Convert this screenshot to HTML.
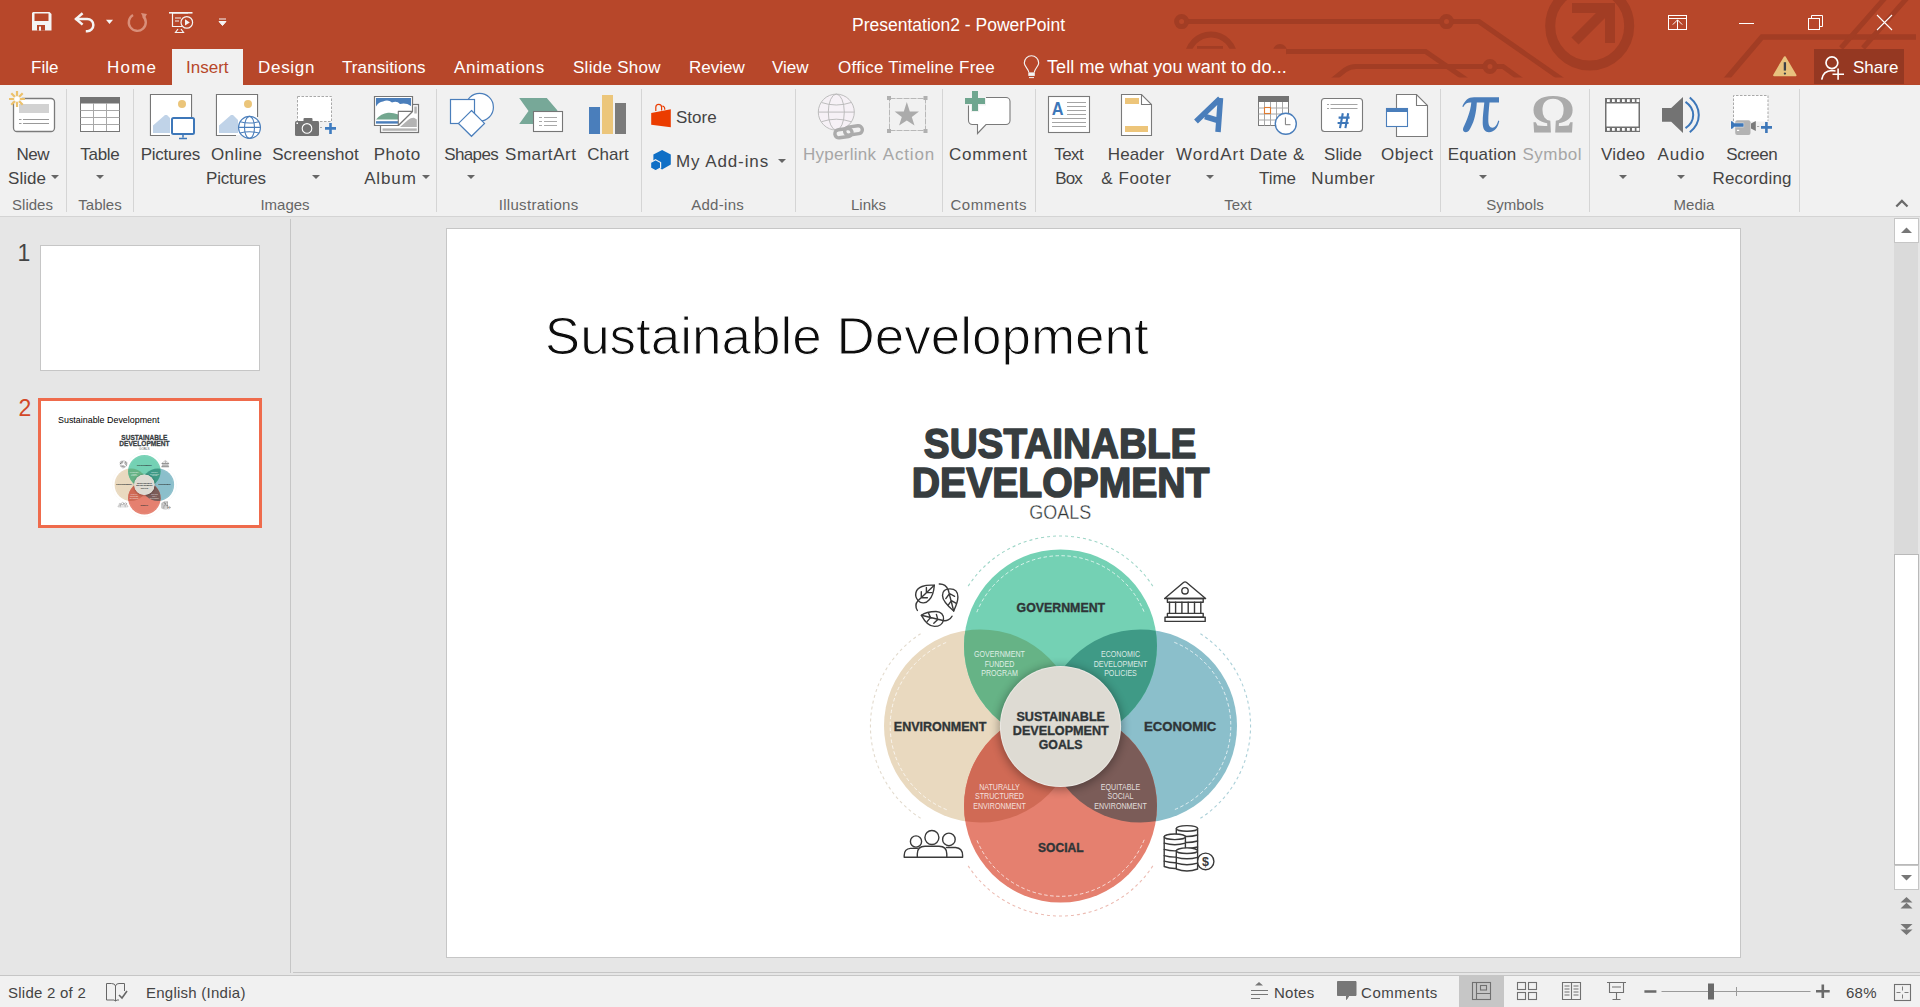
<!DOCTYPE html>
<html><head><meta charset="utf-8">
<style>
*{margin:0;padding:0;box-sizing:border-box}
html,body{width:1920px;height:1007px;overflow:hidden;background:#e6e6e6;font-family:"Liberation Sans",sans-serif}
.a{position:absolute}
#top{left:0;top:0;width:1920px;height:85px;background:#b7472a}
.tab{position:absolute;top:57.5px;color:#fff;font-size:17px;line-height:20px;white-space:nowrap}
#ribbon{left:0;top:85px;width:1920px;height:132px;background:#f1f1f1;border-bottom:1px solid #d4d4d4}
.sep{position:absolute;top:4px;width:1px;height:123px;background:#d5d5d5}
.lbl{position:absolute;font-size:17px;line-height:24px;color:#444;white-space:nowrap;text-align:center}
.glbl{position:absolute;top:111px;font-size:15px;line-height:18px;color:#666;white-space:nowrap;text-align:center}
.dd{position:absolute;width:0;height:0;border-left:4px solid transparent;border-right:4px solid transparent;border-top:4px solid #666}
.dis{color:#a6a6a6}
#left{left:0;top:217px;width:290px;height:755px;background:#e6e6e6}
#main{left:291px;top:217px;width:1629px;height:755px;background:#e6e6e6}
#status{left:0;top:975px;width:1920px;height:32px;background:#f1f1f1;border-top:1px solid #c6c6c6}
.st{position:absolute;font-size:15px;line-height:18px;color:#444;white-space:nowrap;letter-spacing:0.25px}
</style></head><body>
<!-- TITLE BAR -->
<div id="top" class="a">
  <svg class="a" style="left:0;top:0" width="1920" height="85">
    <defs><clipPath id="cp"><path d="M0 0H1920V77.5H0Z"/></clipPath><clipPath id="cp2"><path d="M1286 0H1920V77.5H1286ZM0 0H1920V48.75H0Z"/></clipPath></defs>
    <g clip-path="url(#cp2)" fill="none" stroke="#a23d24" stroke-width="5">
      <path d="M1187.5 21.6H1440.5M1452.5 21.6H1479L1600 106"/>
      <circle cx="1181.6" cy="21.6" r="5"/>
      <circle cx="1446.5" cy="21.6" r="5"/>
      <path d="M1187.5 58A23.5 23.5 0 0 1 1234.5 58" stroke-width="6"/>
      <path d="M1197 47.5H1223" stroke-width="3"/>
      <circle cx="1280" cy="51" r="4.5"/>
      <path d="M1285 51.5H1425.5L1490 96"/>
      <path d="M1320 90L1345 70Q1350 66.5 1356 66.5H1484M1496 66.5H1503L1530 86"/>
      <circle cx="1490" cy="66.5" r="5"/>
      <circle cx="1589.7" cy="26" r="39.5" stroke-width="10"/>
      <path d="M1575 41L1604 12M1572 8H1610V43" stroke-width="10" stroke-linecap="butt" stroke-linejoin="miter"/>
      <path d="M1700 110L1762 37H1916" stroke-width="5.5"/>
      <path d="M1841 48L1892 -10M1863 48L1914 -10" stroke-width="5"/>
    </g>
    <!-- QAT -->
    <path d="M33 12H49.5L51.5 14V30.5H32V13Z" fill="#f4f4f4"/>
    <rect x="34.5" y="13.5" width="14" height="7.5" fill="#b7472a"/>
    <rect x="37" y="25" width="8" height="5.6" fill="#b7472a"/>
    <rect x="39" y="26.5" width="2" height="4.1" fill="#f4f4f4"/>
    <path d="M75.5 18.9H87.2A6.15 6.15 0 0 1 87.2 31.2H85.8" fill="none" stroke="#f4f4f4" stroke-width="2.5"/>
    <path d="M82.6 13.2L76 18.9L82.6 24.6" fill="none" stroke="#f4f4f4" stroke-width="2.5"/>
    <path d="M106 19.75H113L109.5 24Z" fill="#f4f4f4"/>
    <path d="M143 16A8.5 8.5 0 1 1 133 15" fill="none" stroke="#d98f7a" stroke-width="2.4"/>
    <path d="M141 13L147 14L144 19.5Z" fill="#d98f7a"/>
    <path d="M169 12.8H192.5" stroke="#f4f4f4" stroke-width="1.6"/>
    <path d="M172.5 13V26.5H182M172.5 13H188" fill="none" stroke="#f4f4f4" stroke-width="1.2"/>
    <path d="M175 18H181M175 21H179" stroke="#f4f4f4" stroke-width="1"/>
    <circle cx="186.8" cy="22.4" r="5.8" fill="#b7472a" stroke="#f4f4f4" stroke-width="1.2"/>
    <path d="M185 19.3V25.5L189.8 22.4Z" fill="#f4f4f4"/>
    <path d="M178 29L175.5 32.5H183.5L181 29" fill="none" stroke="#f4f4f4" stroke-width="1.2"/>
    <path d="M219 19H226M219 21.5H226L222.5 25.5Z" fill="#f4f4f4" stroke="#f4f4f4" stroke-width="1"/>
    <!-- window buttons -->
    <rect x="1668.5" y="15.5" width="18" height="14" fill="none" stroke="#fff" stroke-width="1"/>
    <path d="M1668.5 18.5H1686.5M1677.5 29.5V19.8M1672.8 24.6L1677.5 19.9L1682.2 24.6" fill="none" stroke="#fff" stroke-width="1"/>
    <path d="M1739 23.5H1754" stroke="#fff" stroke-width="1"/>
    <rect x="1808.5" y="18.5" width="11" height="11" fill="none" stroke="#fff" stroke-width="1"/>
    <path d="M1811.5 18.5V15.5H1822.5V26.5H1819.5" fill="none" stroke="#fff" stroke-width="1"/>
    <path d="M1877 15L1892 30M1892 15L1877 30" stroke="#fff" stroke-width="1.1"/>
    <!-- tell me bulb -->
    <path d="M1028.9 72.5C1028.3 68.5 1024.3 66.3 1024.3 62.9A7.2 7.2 0 0 1 1038.7 62.9C1038.7 66.3 1034.7 68.5 1034.2 72.5" fill="none" stroke="#f4f4f4" stroke-width="1.15"/>
    <rect x="1028.3" y="72.4" width="6.5" height="3.5" fill="#f4f4f4"/>
    <path d="M1029 77.6H1034" stroke="#f4f4f4" stroke-width="1"/>
    <!-- warning -->
    <path d="M1784.8 57.3L1795.4 75.2H1774.2Z" fill="#e8c27e" stroke="#e8c27e" stroke-width="2.2" stroke-linejoin="round"/>
    <path d="M1784.9 62.2V70.6" stroke="#3a4149" stroke-width="2.3"/><circle cx="1784.9" cy="73.6" r="1.15" fill="#3a4149"/>
  </svg>
  <div class="tab" style="left:31px">File</div>
  <div class="tab" style="left:107px;letter-spacing:1.2px">Home</div>
  <div class="a" style="left:172px;top:49px;width:71px;height:36px;background:#f1f1f1"></div>
  <div class="tab" style="left:186px;color:#b7472a">Insert</div>
  <div class="tab" style="left:258px;letter-spacing:0.7px">Design</div>
  <div class="tab" style="left:342px;letter-spacing:0.1px">Transitions</div>
  <div class="tab" style="left:454px;letter-spacing:0.67px">Animations</div>
  <div class="tab" style="left:573px;letter-spacing:0.28px">Slide Show</div>
  <div class="tab" style="left:689px">Review</div>
  <div class="tab" style="left:772px">View</div>
  <div class="tab" style="left:838px;letter-spacing:0.26px">Office Timeline Free</div>
  <div class="tab" style="left:1047px;top:56.7px;font-size:18px;letter-spacing:0.09px">Tell me what you want to do...</div>
  <div class="a" style="left:852px;top:15px;color:#fff;font-size:17.5px;line-height:20px;white-space:nowrap">Presentation2 - PowerPoint</div>
  <div class="a" style="left:1814px;top:49px;width:90px;height:35px;background:#953822"></div>
  <svg class="a" style="left:1814px;top:49px" width="40" height="36"><circle cx="17.9" cy="13.7" r="5.9" fill="none" stroke="#fff" stroke-width="1.7"/><path d="M7.7 30.6Q9 21.8 18 21.5L21.5 22" fill="none" stroke="#fff" stroke-width="1.7"/><path d="M18.5 25.2H30M24.1 19.6V30.7" stroke="#fff" stroke-width="1.6"/></svg>
  <div class="tab" style="left:1853px">Share</div>
</div>
<!-- RIBBON -->
<div id="ribbon" class="a">
<div class="lbl" style="left:-27.25px;top:57.8px;width:120px;letter-spacing:-0.50px">New</div>
<div class="lbl" style="left:-33.00px;top:81.9px;width:120px;letter-spacing:0.00px">Slide</div>
<div class="lbl" style="left:39.88px;top:57.8px;width:120px;letter-spacing:-0.25px">Table</div>
<div class="lbl" style="left:110.36px;top:57.8px;width:120px;letter-spacing:-0.29px">Pictures</div>
<div class="lbl" style="left:176.70px;top:57.8px;width:120px;letter-spacing:0.40px">Online</div>
<div class="lbl" style="left:175.89px;top:81.9px;width:120px;letter-spacing:-0.21px">Pictures</div>
<div class="lbl" style="left:255.53px;top:57.8px;width:120px;letter-spacing:0.06px">Screenshot</div>
<div class="lbl" style="left:337.25px;top:57.8px;width:120px;letter-spacing:0.50px">Photo</div>
<div class="lbl" style="left:330.44px;top:81.9px;width:120px;letter-spacing:0.88px">Album</div>
<div class="lbl" style="left:411.20px;top:57.8px;width:120px;letter-spacing:-0.60px">Shapes</div>
<div class="lbl" style="left:480.79px;top:57.8px;width:120px;letter-spacing:0.57px">SmartArt</div>
<div class="lbl" style="left:548.00px;top:57.8px;width:120px;letter-spacing:0.00px">Chart</div>
<div class="lbl dis" style="left:779.62px;top:57.8px;width:120px;letter-spacing:0.25px">Hyperlink</div>
<div class="lbl dis" style="left:848.90px;top:57.8px;width:120px;letter-spacing:0.80px">Action</div>
<div class="lbl" style="left:928.38px;top:57.8px;width:120px;letter-spacing:0.75px">Comment</div>
<div class="lbl" style="left:1008.75px;top:57.8px;width:120px;letter-spacing:-0.50px">Text</div>
<div class="lbl" style="left:1008.50px;top:81.9px;width:120px;letter-spacing:-1.00px">Box</div>
<div class="lbl" style="left:1076.05px;top:57.8px;width:120px;letter-spacing:0.10px">Header</div>
<div class="lbl" style="left:1076.32px;top:81.9px;width:120px;letter-spacing:0.64px">&amp; Footer</div>
<div class="lbl" style="left:1150.50px;top:57.8px;width:120px;letter-spacing:1.00px">WordArt</div>
<div class="lbl" style="left:1217.25px;top:57.8px;width:120px;letter-spacing:0.50px">Date &amp;</div>
<div class="lbl" style="left:1217.50px;top:81.9px;width:120px;letter-spacing:0.00px">Time</div>
<div class="lbl" style="left:1283.00px;top:57.8px;width:120px;letter-spacing:0.00px">Slide</div>
<div class="lbl" style="left:1283.30px;top:81.9px;width:120px;letter-spacing:0.60px">Number</div>
<div class="lbl" style="left:1347.30px;top:57.8px;width:120px;letter-spacing:0.60px">Object</div>
<div class="lbl" style="left:1422.11px;top:57.8px;width:120px;letter-spacing:0.21px">Equation</div>
<div class="lbl dis" style="left:1492.25px;top:57.8px;width:120px;letter-spacing:0.50px">Symbol</div>
<div class="lbl" style="left:1563.12px;top:57.8px;width:120px;letter-spacing:0.25px">Video</div>
<div class="lbl" style="left:1621.44px;top:57.8px;width:120px;letter-spacing:0.88px">Audio</div>
<div class="lbl" style="left:1691.75px;top:57.8px;width:120px;letter-spacing:-0.50px">Screen</div>
<div class="lbl" style="left:1692.09px;top:81.9px;width:120px;letter-spacing:0.19px">Recording</div>
<div class="dd" style="left:50.5px;top:90px"></div>
<div class="dd" style="left:95.5px;top:90px"></div>
<div class="dd" style="left:311.5px;top:90px"></div>
<div class="dd" style="left:421.5px;top:90px"></div>
<div class="dd" style="left:467px;top:90px"></div>
<div class="dd" style="left:1206px;top:90px"></div>
<div class="dd" style="left:1478.5px;top:90px"></div>
<div class="dd" style="left:1618.5px;top:90px"></div>
<div class="dd" style="left:1676.5px;top:90px"></div>
<div class="glbl" style="left:-27.5px;width:120px">Slides</div>
<div class="glbl" style="left:40px;width:120px">Tables</div>
<div class="glbl" style="left:225px;width:120px">Images</div>
<div class="glbl" style="left:478.65px;width:120px;letter-spacing:0.3px">Illustrations</div>
<div class="glbl" style="left:657.65px;width:120px;letter-spacing:0.3px">Add-ins</div>
<div class="glbl" style="left:808.5px;width:120px">Links</div>
<div class="glbl" style="left:928.75px;width:120px;letter-spacing:0.5px">Comments</div>
<div class="glbl" style="left:1178px;width:120px">Text</div>
<div class="glbl" style="left:1455px;width:120px">Symbols</div>
<div class="glbl" style="left:1634px;width:120px">Media</div>
<div class="sep" style="left:66px"></div>
<div class="sep" style="left:133px"></div>
<div class="sep" style="left:436px"></div>
<div class="sep" style="left:641px"></div>
<div class="sep" style="left:795px"></div>
<div class="sep" style="left:942px"></div>
<div class="sep" style="left:1035px"></div>
<div class="sep" style="left:1440px"></div>
<div class="sep" style="left:1589px"></div>
<div class="sep" style="left:1799px"></div>
<div class="lbl" style="left:676px;top:20.8px;text-align:left">Store</div>
<div class="lbl" style="left:676px;top:64.8px;text-align:left;letter-spacing:0.9px">My Add-ins</div>
<div class="dd" style="left:778px;top:74px"></div>
<div class="a" style="left:1895px;top:115px;width:12px;height:12px"><svg width="16" height="12" style="position:absolute;top:-3px;left:-1px"><path d="M2.3 9.5L7.9 3.9L13.5 9.5" fill="none" stroke="#6a6a6a" stroke-width="2.2"/></svg></div>
</div>
<svg class="a" style="left:0;top:0" width="1920" height="217" viewBox="0 0 1920 217">
<!-- New Slide -->
<rect x="13.5" y="98.5" width="41" height="33" rx="3.5" fill="#fff" stroke="#7b7b7b" stroke-width="1.3"/>
<rect x="19" y="104" width="30" height="9" fill="#d2d2d2"/>
<path d="M19 119.5h2.5M23 119.5h26M19 123.5h2.5M23 123.5h26" stroke="#9a9a9a" stroke-width="1"/>
<circle cx="17" cy="99" r="5" fill="#f1f1f1"/>
<g stroke="#ecc16b" stroke-width="2.2"><path d="M17 91v16M9 99h16M11.3 93.3l11.4 11.4M22.7 93.3l-11.4 11.4"/></g>
<circle cx="17" cy="99" r="2.8" fill="#fff" stroke="#f1f1f1" stroke-width="0.5"/>
<!-- Table -->
<rect x="80.5" y="97.5" width="39" height="34" fill="#fff" stroke="#767676" stroke-width="1"/>
<rect x="80" y="97" width="40" height="6.5" fill="#737373"/>
<path d="M80.5 110.5h39M80.5 117.5h39M80.5 124.5h39M93.5 103v28M106.5 103v28" stroke="#a8a8a8" stroke-width="1"/>
<!-- Pictures -->
<path d="M170 135.5H150.5V94.5H191.5V117" fill="#fff" stroke="#767676" stroke-width="1.2"/>
<rect x="151" y="95" width="40" height="40" fill="#fff"/>
<circle cx="182" cy="104" r="4" fill="#ebc57a"/>
<path d="M153 133V125.5L165 115H167L170 118V133Z" fill="#c0d3e8"/>
<rect x="172" y="118" width="22" height="16" rx="1.5" fill="#fff" stroke="#3d77b9" stroke-width="2"/>
<path d="M183 135v2.5M179 138.5h8" stroke="#3d77b9" stroke-width="1.5"/>
<!-- Online Pictures -->
<path d="M236 135.5H216.5V94.5H257.5V117" fill="#fff" stroke="#767676" stroke-width="1.2"/>
<rect x="217" y="95" width="40" height="40" fill="#fff"/>
<circle cx="248" cy="104" r="4" fill="#ebc57a"/>
<path d="M219 133V125.5L231 115H233L238 120V133Z" fill="#c0d3e8"/>
<circle cx="249.5" cy="127.4" r="11.5" fill="#fff"/>
<g fill="none" stroke="#4a7ebb" stroke-width="1.1"><circle cx="249.5" cy="127.4" r="11"/><ellipse cx="249.5" cy="127.4" rx="5" ry="11"/><path d="M238.5 127.4h22M240 121.8q9.5 2.5 19 0M240 133q9.5 -2.5 19 0"/></g>
<!-- Screenshot -->
<rect x="297.5" y="96.5" width="34" height="25" fill="#fff" stroke="#a9a9a9" stroke-width="1" stroke-dasharray="2.5 1.5"/>
<rect x="295" y="121" width="24" height="15" rx="1.5" fill="#737373"/>
<rect x="303.5" y="118" width="9" height="4" rx="1" fill="#737373"/>
<circle cx="307" cy="128.4" r="4.8" fill="#737373" stroke="#fff" stroke-width="1.1"/>
<rect x="296.5" y="122.5" width="1.5" height="1.5" fill="#fff"/>
<path d="M320 127.5h2" stroke="#a9a9a9" stroke-width="1"/>
<path d="M330.5 123v11M325 128.4h11" stroke="#3f7cc0" stroke-width="2.6"/>
<!-- Photo Album -->
<rect x="380.5" y="104.5" width="38" height="28" fill="#fff" stroke="#767676" stroke-width="1.2"/>
<rect x="382.5" y="128.4" width="34.3" height="2.4" fill="#b3b3b3"/>
<rect x="414.3" y="106.5" width="2.5" height="7" fill="#b3b3b3"/>
<path d="M400 127L408 120Q411 117.5 414 117.8L416.8 119.5V127Z" fill="#b3b3b3"/>
<path d="M374.5 96.5H412.5V111.4L398.3 125.5H374.5Z" fill="#fff" stroke="#767676" stroke-width="1.2"/>
<path d="M376 98H411V106Q406 102.5 400 104Q397 100.5 392 102.5Q388 99 383 101.5Q378.5 102 376 106.5Z" fill="#4a7ebb"/>
<path d="M376 119.6Q381 113.5 388 112.8Q393 112.5 398.3 114.5V119.6Z" fill="#73a78f"/>
<rect x="376" y="121.2" width="22.3" height="2.4" fill="#4a7ebb"/>
<path d="M398.3 125.5V111.4H412.5Z" fill="#fff" stroke="#767676" stroke-width="1.1" stroke-linejoin="round"/>
<!-- Shapes -->
<circle cx="479.6" cy="107.2" r="13.8" fill="#fff" stroke="#4a7ebb" stroke-width="1.2"/>
<rect x="450.5" y="99.5" width="24" height="24" fill="#fff" stroke="#4a7ebb" stroke-width="1.2"/>
<path d="M471.5 110.5L484.5 123.4L471.5 136.3L458.5 123.4Z" fill="#fff" stroke="#4a7ebb" stroke-width="1.2"/>
<!-- SmartArt -->
<path d="M519.2 98.1H546.8L557.5 110.5L546.8 124H519.2L528.5 111Z" fill="#77a898"/>
<rect x="533.5" y="111.5" width="29" height="20" fill="#fff" stroke="#767676" stroke-width="1.1"/>
<path d="M539 117.5h3M544 117.5h13M539 121.5h3M544 121.5h13M539 125.5h3M544 125.5h13" stroke="#9e9e9e" stroke-width="0.9"/>
<!-- Chart -->
<rect x="589" y="107" width="11" height="27" fill="#4a7ebb"/>
<rect x="602" y="95" width="11" height="39" fill="#ecc67b"/>
<rect x="615" y="103" width="11" height="31" fill="#7b7b7b"/>
<!-- Store -->
<path d="M651.2 112.9L670.8 109.3V127.2L651.2 124.8Z" fill="#eb3c00"/>
<path d="M655.8 111V107.3A2.9 2.9 0 0 1 661.6 107.3V110.5M662.4 106.2A2.3 2.3 0 0 1 664.7 108.5V109.8" fill="none" stroke="#eb3c00" stroke-width="1.2"/>
<!-- My Add-ins -->
<path d="M662.1 149.9L670.8 154.5V164.5L662.1 169.5L653.4 164.5V154.5Z" fill="#0f6fc6"/>
<path d="M655.6 159.8L660.6 162.5V168L655.6 170.8L650.6 168V162.5Z" fill="#0f6fc6" stroke="#f1f1f1" stroke-width="1.2"/>
<!-- Hyperlink -->
<circle cx="836.3" cy="112.1" r="18" fill="#f6f1f6" stroke="#b7b7b7" stroke-width="0.9"/>
<g fill="none" stroke="#b7b7b7" stroke-width="0.9"><ellipse cx="836.3" cy="112.1" rx="8" ry="18"/><path d="M818.3 112.1h36M821.5 102.5q14.8 5 29.6 0M821.5 121.7q14.8 -5 29.6 0"/></g>
<g fill="none" stroke="#ababab" stroke-width="3.4"><rect x="834.8" y="129.1" width="17.3" height="8.1" rx="4.05" transform="rotate(-8 843.4 133.2)"/><rect x="844.6" y="126.4" width="17.8" height="8" rx="4" transform="rotate(-8 853.5 130.4)"/></g>
<!-- Action -->
<rect x="889.5" y="98.5" width="36" height="32" fill="none" stroke="#b8b8b8" stroke-width="1" stroke-dasharray="6 1"/>
<g fill="#b0b0b0"><rect x="887" y="96" width="4" height="4"/><rect x="923.5" y="96" width="4" height="4"/><rect x="887" y="129" width="4" height="4"/><rect x="923.5" y="129" width="4" height="4"/></g>
<path d="M906.8 102L909.8 111.5H919L911.8 117L914.5 125.5L906.8 120.5L899.1 125.5L901.8 117L894.6 111.5H903.8Z" fill="#ababab"/>
<!-- Comment -->
<path d="M972 97.5H1006A4 4 0 0 1 1010 101.5V120.5A4 4 0 0 1 1006 124.5H986L977.5 133.5V124.5H972.5A4 4 0 0 1 968.5 120.5V101.5A4 4 0 0 1 972.5 97.5Z" fill="#fff" stroke="#7a7a7a" stroke-width="1.1"/>
<rect x="964" y="96.5" width="22" height="9" fill="#f1f1f1"/>
<rect x="971" y="90" width="8" height="22" fill="#f1f1f1"/>
<g fill="#6fa68f"><rect x="972" y="91" width="6" height="20"/><rect x="965" y="98" width="20" height="6"/></g>
<!-- Text Box -->
<rect x="1048.5" y="96.5" width="41" height="36" fill="#fff" stroke="#7a7a7a" stroke-width="1.1"/>
<text x="1051.8" y="114.9" font-family="Liberation Sans" font-weight="bold" font-size="17.5" fill="#3d77b9" textLength="11.8" lengthAdjust="spacingAndGlyphs">A</text>
<path d="M1067 102.5h19M1067 106.5h19M1067 110.5h19M1067 114.5h19M1052 118.5h34M1052 122.5h34M1052 126.5h34" stroke="#9a9a9a" stroke-width="0.9"/>
<!-- Header & Footer -->
<path d="M1121.5 94.5H1141.5L1151.5 104.5V135.5H1121.5Z" fill="#fff" stroke="#7a7a7a" stroke-width="1.1"/>
<path d="M1141.5 94.5V104.5H1151.5" fill="none" stroke="#7a7a7a" stroke-width="1.1"/>
<rect x="1125" y="98" width="14" height="6" fill="#edc57a"/>
<rect x="1125" y="126" width="23" height="6" fill="#edc57a"/>
<!-- WordArt -->
<path d="M1196 121.5L1220 98.5M1220.5 98L1218 132M1205 116.5L1218 120.5" stroke="#4a7ebb" stroke-width="5.5" stroke-linecap="butt" fill="none"/>
<!-- Date & Time -->
<rect x="1258.5" y="96.5" width="30" height="29" fill="#fff" stroke="#7a7a7a" stroke-width="1"/>
<rect x="1258" y="96" width="31" height="6" fill="#737373"/>
<path d="M1264.5 102v23.5M1270.5 102v23.5M1276.5 102v23.5M1282.5 102v23.5M1258.5 108h30M1258.5 114h30M1258.5 120h30" stroke="#a8a8a8" stroke-width="1"/>
<rect x="1264.5" y="107.5" width="6" height="6" fill="#fff" stroke="#e07b30" stroke-width="1.1"/>
<circle cx="1285.8" cy="123.8" r="10.5" fill="#fff" stroke="#4a7ebb" stroke-width="1.4"/>
<path d="M1285.4 117.5V124.7H1290.5" fill="none" stroke="#7a7a7a" stroke-width="1"/>
<!-- Slide Number -->
<rect x="1321.5" y="98.5" width="41" height="33" rx="3" fill="#fff" stroke="#7a7a7a" stroke-width="1.1"/>
<path d="M1327 104.5h2M1330.5 104.5h27M1327 108.5h2M1330.5 108.5h27" stroke="#9a9a9a" stroke-width="0.9"/>
<path d="M1342.8 113.2L1340 128.1M1348.2 113.2L1345.4 128.1M1338.6 117.6H1349.6M1337.6 123H1348.6" stroke="#3d77b9" stroke-width="2.1" fill="none"/>
<!-- Object -->
<path d="M1396.5 94.5H1416.5L1427.5 105.5V136.5H1396.5Z" fill="#fff" stroke="#7a7a7a" stroke-width="1.1"/>
<path d="M1416.5 94.5V105.5H1427.5" fill="none" stroke="#7a7a7a" stroke-width="1.1"/>
<rect x="1386.5" y="108.5" width="21" height="18" fill="#fff" stroke="#4a7ebb" stroke-width="1.1"/>
<rect x="1386" y="108" width="22" height="4" fill="#4a7ebb"/>
<!-- Equation -->
<path d="M1462.3 106.5C1465 100.5 1468 97.3 1474 97.3L1499 97.3V102.6H1489.5C1488.8 110 1488.3 116 1488.3 120C1488.3 125 1489.5 127.7 1492.5 127.7C1495 127.7 1497 125 1498.3 120.5L1499.3 121C1498 127.5 1494.5 132.2 1489 132.2C1484.2 132.2 1482.7 128 1482.7 122.5C1482.7 116 1483.7 109 1484.3 102.6H1476.8C1476.3 112 1474.5 121 1471 127C1469.5 130 1468.5 132.2 1465.8 132.2C1463.3 132.2 1462.4 130 1463.4 127.6C1466.5 121 1470.5 112 1471.3 102.6H1470.5C1466.8 102.6 1465 104 1463.3 107Z" fill="#4a7ebb"/>
<!-- Symbol -->
<text x="1531" y="132" font-family="Liberation Serif" font-weight="bold" font-size="55" fill="#ababab">Ω</text>
<!-- Video -->
<rect x="1605" y="98" width="35" height="34" fill="#707070"/>
<rect x="1606.5" y="103.5" width="32" height="23" fill="#fff"/>
<g fill="#fff"><rect x="1607" y="99.2" width="2.8" height="2.8"/><rect x="1612" y="99.2" width="2.8" height="2.8"/><rect x="1617" y="99.2" width="2.8" height="2.8"/><rect x="1622" y="99.2" width="2.8" height="2.8"/><rect x="1627" y="99.2" width="2.8" height="2.8"/><rect x="1632" y="99.2" width="2.8" height="2.8"/><rect x="1636.5" y="99.2" width="2.8" height="2.8"/>
<rect x="1607" y="128" width="2.8" height="2.8"/><rect x="1612" y="128" width="2.8" height="2.8"/><rect x="1617" y="128" width="2.8" height="2.8"/><rect x="1622" y="128" width="2.8" height="2.8"/><rect x="1627" y="128" width="2.8" height="2.8"/><rect x="1632" y="128" width="2.8" height="2.8"/><rect x="1636.5" y="128" width="2.8" height="2.8"/></g>
<!-- Audio -->
<path d="M1662 108.1H1671.2L1683 97V133L1671.2 121.7H1662Z" fill="#737373"/>
<path d="M1685.5 101.8Q1693.2 107 1693.2 115T1685.5 128.2M1689.8 97.5Q1698.8 105 1698.8 115T1689.8 132.3" fill="none" stroke="#3d77b9" stroke-width="2"/>
<!-- Screen Recording -->
<rect x="1733.5" y="95.5" width="34.5" height="26" fill="#fff"/>
<path d="M1733.5 121V95.5H1768V121" fill="none" stroke="#a9a9a9" stroke-width="1" stroke-dasharray="2.5 1.5"/>
<rect x="1735.2" y="120.2" width="15.3" height="14.8" rx="2" fill="#b3b3b3"/>
<rect x="1737" y="129.8" width="2.2" height="1.2" fill="#fff"/>
<path d="M1731 121Q1733.6 121.4 1734 123.2H1743.6V126.8H1734Q1733.6 128.6 1731 129Z" fill="#3d77b9" stroke="#fff" stroke-width="0.8" paint-order="stroke"/>
<path d="M1751 123.5L1755.8 121V131L1751 128.5Z" fill="#7a7a7a"/>
<path d="M1757 126.5h2.2" stroke="#a9a9a9" stroke-width="1"/>
<path d="M1766.4 122v11M1761 127.4h11" stroke="#3d77b9" stroke-width="2.6"/>
</svg>

<div id="left" class="a"></div>
<div class="a" style="left:17.5px;top:240.5px;font-size:23px;line-height:24px;color:#444">1</div>
<div class="a" style="left:40px;top:245px;width:220px;height:126px;background:#fff;border:1px solid #c6c6c6"></div>
<div class="a" style="left:18.5px;top:395.5px;font-size:23px;line-height:24px;color:#d24726">2</div>
<div class="a" style="left:38px;top:398px;width:224px;height:130px;background:#fff;border:3px solid #ef6b4c"></div>
<svg class="a" style="left:0;top:0" width="300" height="540"><use href="#sc" transform="translate(41 401) scale(0.1685) translate(-447 -229)"/><text x="58" y="422.9" font-family="Liberation Sans" font-size="9" fill="#000" textLength="101.5" lengthAdjust="spacingAndGlyphs">Sustainable Development</text></svg>
<div class="a" style="left:290px;top:219px;width:1px;height:754px;background:#c6c6c6"></div>
<div id="main" class="a"></div>
<div class="a" style="left:446px;top:228px;width:1295px;height:730px;background:#fff;border:1px solid #c6c6c6"></div>
<!--SLIDE--><svg class="a" style="left:0;top:0" width="1920" height="1007" viewBox="0 0 1920 1007">
<defs>
<clipPath id="kg"><circle cx="1060.5" cy="646" r="96.5"/></clipPath>
<clipPath id="ke"><circle cx="980.5" cy="726" r="96.5"/></clipPath>
<clipPath id="kc"><circle cx="1140.5" cy="726" r="96.5"/></clipPath>
<clipPath id="ks"><circle cx="1060.5" cy="806" r="96.5"/></clipPath>
<filter id="sh" x="-30%" y="-30%" width="160%" height="160%"><feGaussianBlur stdDeviation="5"/></filter>
</defs>
<text x="544.8" y="354.2" font-family="Liberation Sans" font-size="52.5" fill="#0d0d0d" stroke="#fff" stroke-width="1.1" textLength="604" lengthAdjust="spacingAndGlyphs">Sustainable Development</text>
<g id="sc">
<g font-family="Liberation Sans" font-weight="bold" fill="#373d3f" stroke="#373d3f" stroke-width="1.6" stroke-linejoin="round">
<text x="923.8" y="458" font-size="43" textLength="272.6" lengthAdjust="spacingAndGlyphs">SUSTAINABLE</text>
<text x="911.8" y="497.2" font-size="42" textLength="297.7" lengthAdjust="spacingAndGlyphs">DEVELOPMENT</text>
</g>
<text x="1029.3" y="519" font-family="Liberation Sans" font-size="19.3" fill="#2f3537" stroke="#fff" stroke-width="0.35" textLength="62" lengthAdjust="spacingAndGlyphs">GOALS</text>
<g fill="none" stroke-width="1.1" stroke-dasharray="3 3">
<path d="M968.2 586.1A110 110 0 0 1 1152.8 586.1" stroke="#9fd6c8"/>
<path d="M1200.4 633.7A110 110 0 0 1 1200.4 818.3" stroke="#acd0d8"/>
<path d="M1152.8 865.9A110 110 0 0 1 968.2 865.9" stroke="#ecbcb3"/>
<path d="M920.6 818.3A110 110 0 0 1 920.6 633.7" stroke="#e2dacd"/>
</g>
<circle cx="980.5" cy="726" r="96.5" fill="#e9d9bf"/>
<circle cx="1140.5" cy="726" r="96.5" fill="#8bbfcb"/>
<circle cx="1060.5" cy="646" r="96.5" fill="#74d1b4"/>
<circle cx="1060.5" cy="806" r="96.5" fill="#e5806f"/>
<g clip-path="url(#kg)"><circle cx="980.5" cy="726" r="96.5" fill="#66b386"/><circle cx="1140.5" cy="726" r="96.5" fill="#3f9a86"/></g>
<g clip-path="url(#ks)"><circle cx="980.5" cy="726" r="96.5" fill="#d06a55"/><circle cx="1140.5" cy="726" r="96.5" fill="#7b5c58"/></g>
<g fill="none" stroke="#fff" stroke-opacity="0.8" stroke-width="0.9" stroke-dasharray="3.5 2.5">
<path d="M976.8 612.2A90.25 90.25 0 0 1 1144.2 612.2"/>
<path d="M1174.3 642.3A90.25 90.25 0 0 1 1174.3 809.7"/>
<path d="M1144.2 839.8A90.25 90.25 0 0 1 976.8 839.8"/>
<path d="M946.7 809.7A90.25 90.25 0 0 1 946.7 642.3"/>
</g>
<circle cx="1060.5" cy="728" r="62" fill="#000" opacity="0.32" filter="url(#sh)"/>
<circle cx="1060.5" cy="726.5" r="60.6" fill="#ebe8e3"/>
<circle cx="1060.5" cy="726.5" r="59.6" fill="#dedbd3"/>
<g font-family="Liberation Sans" font-weight="bold" fill="#2f3537" stroke="#2f3537" stroke-width="0.35">
<text x="1016.6" y="612.3" font-size="12.6" textLength="88.5" lengthAdjust="spacingAndGlyphs">GOVERNMENT</text>
<text x="893.8" y="730.5" font-size="12.6" textLength="92.5" lengthAdjust="spacingAndGlyphs">ENVIRONMENT</text>
<text x="1144" y="730.5" font-size="12.6" textLength="72.3" lengthAdjust="spacingAndGlyphs">ECONOMIC</text>
<text x="1038" y="852.4" font-size="12.6" textLength="45.6" lengthAdjust="spacingAndGlyphs">SOCIAL</text>
<text x="1016.4" y="720.6" font-size="12.6" textLength="88.6" lengthAdjust="spacingAndGlyphs">SUSTAINABLE</text>
<text x="1012.8" y="734.7" font-size="12.6" textLength="96.0" lengthAdjust="spacingAndGlyphs">DEVELOPMENT</text>
<text x="1038.75" y="749" font-size="12.6" textLength="43.8" lengthAdjust="spacingAndGlyphs">GOALS</text>
</g>
<g font-family="Liberation Sans" fill="#fff" fill-opacity="0.8" text-anchor="middle" font-size="8.4">
<text x="999.5" y="656.8" textLength="50.9" lengthAdjust="spacingAndGlyphs">GOVERNMENT</text>
<text x="999.5" y="666.5" textLength="29.6" lengthAdjust="spacingAndGlyphs">FUNDED</text>
<text x="999.5" y="676.2" textLength="36.7" lengthAdjust="spacingAndGlyphs">PROGRAM</text>
<text x="1120.5" y="656.8" textLength="39.0" lengthAdjust="spacingAndGlyphs">ECONOMIC</text>
<text x="1120.5" y="666.5" textLength="53.7" lengthAdjust="spacingAndGlyphs">DEVELOPMENT</text>
<text x="1120.5" y="676.2" textLength="32.7" lengthAdjust="spacingAndGlyphs">POLICIES</text>
<text x="999.5" y="789.5" textLength="40.7" lengthAdjust="spacingAndGlyphs">NATURALLY</text>
<text x="999.5" y="799.2" textLength="48.9" lengthAdjust="spacingAndGlyphs">STRUCTURED</text>
<text x="999.5" y="808.9" textLength="52.5" lengthAdjust="spacingAndGlyphs">ENVIRONMENT</text>
<text x="1120.5" y="789.5" textLength="39.3" lengthAdjust="spacingAndGlyphs">EQUITABLE</text>
<text x="1120.5" y="799.2" textLength="26.0" lengthAdjust="spacingAndGlyphs">SOCIAL</text>
<text x="1120.5" y="808.9" textLength="52.5" lengthAdjust="spacingAndGlyphs">ENVIRONMENT</text>
</g>
<g fill="none" stroke="#3a3a3a" stroke-width="1.4" stroke-linecap="round" stroke-linejoin="round">
<path d="M918.2 600.6C914 596 915 589 922 586.5C926 585 931 585 934.3 585.2C934 590 933 596 929 600C926 603.5 921 604 918.2 600.6Z"/>
<path d="M918.2 600.6L934.3 585.2M921.3 597.6V591.7M921.5 597.8H927.4M926.4 592.5V587.5M926.8 592.6H932"/>
<path d="M918.2 600.6C915.5 603.5 915.5 607.5 917.4 610.5"/>
<path d="M953.7 611C949 607 942.5 601 942.5 595.5C942.5 591 945.5 588.9 950 588.9C955 588.9 957.9 592 957.9 597C957.9 602 955.5 607 953.7 611Z"/>
<path d="M948.2 589.7L953.7 611M949.6 593.5L945.8 598.6M949.6 593.5L954.6 596.3M951.4 600.6L948.2 605.2M951.4 600.6L956.3 603.4"/>
<path d="M939.3 584C943.5 583.8 946.5 586 948.2 589.7"/>
<path d="M921.4 615.3C925 612.5 931 611.5 936 611.5C941 611.5 944 615 943.5 619.5C943 624 939 626.4 934.5 626.4C929 626.4 924.5 621 921.4 615.3Z"/>
<path d="M921.4 615.3L943 620.5M930.5 617.6L928.6 613.2M930.5 617.6L927.3 621.4M937.8 619.4L936.4 614.4M937.8 619.4L933.8 623.3"/>
<path d="M943 620.5C946.5 621.5 950.3 619.5 952 616.2"/>
<path d="M1164.6 598.5L1183.5 582.5Q1185 581.3 1186.6 582.5L1205.6 598.5Z"/>
<circle cx="1185" cy="590.8" r="3.2"/>
<rect x="1167.4" y="598.5" width="35.8" height="3.8"/>
<path d="M1169.5 602.3V613.4M1175.6 602.3V613.4M1181.9 602.3V613.4M1188.2 602.3V613.4M1194.5 602.3V613.4M1200.8 602.3V613.4"/>
<rect x="1167.4" y="613.4" width="35.8" height="3.9"/>
<rect x="1165" y="617.3" width="40.2" height="4.1"/>
<circle cx="916" cy="841.5" r="5.6"/><circle cx="931.9" cy="837.5" r="7"/><circle cx="948.9" cy="839.4" r="6.3"/>
<path d="M917.3 848.4H910.5Q904.2 849 904.2 855.5V857.3H962.6V855.5Q962.6 848 955.5 847.5H946.5"/>
<path d="M917.3 857.3V854Q917.3 846.3 925 846.3H939Q946.8 846.3 946.8 854V857.3"/>
<path d="M1176.3 828.4V850H1197.6V828.4Z" fill="#fff" stroke="none"/>
<path d="M1176.3 850V828.4M1197.6 828.4V850"/>
<ellipse cx="1187" cy="828.4" rx="10.6" ry="2.8" fill="#fff"/>
<path d="M1176.3 835Q1187 838 1197.6 835M1176.3 841Q1187 844 1197.6 841M1176.3 847Q1187 850 1197.6 847"/>
<path d="M1164.2 836.8V866.5Q1174.8 870.5 1185.4 866.5V836.8Z" fill="#fff"/>
<ellipse cx="1174.8" cy="836.8" rx="10.6" ry="2.8" fill="#fff"/>
<path d="M1164.2 843.2Q1174.8 846.2 1185.4 843.2M1164.2 849.4Q1174.8 852.4 1185.4 849.4M1164.2 855.6Q1174.8 858.6 1185.4 855.6M1164.2 861.2Q1174.8 864.2 1185.4 861.2"/>
<circle cx="1205.6" cy="861.4" r="8.3" fill="#fff"/>
<path d="M1176.3 850.7V869Q1187 873 1197.6 869V850.7Z" fill="#fff"/>
<ellipse cx="1187" cy="850.7" rx="10.6" ry="2.8" fill="#fff"/>
<path d="M1176.3 857.3Q1187 860.3 1197.6 857.3M1176.3 863.2Q1187 866.2 1197.6 863.2"/>
</g>
<text x="1205.6" y="866" text-anchor="middle" font-family="Liberation Sans" font-weight="bold" font-size="12.5" fill="#3a3a3a">$</text>
</g>
</svg><!--/SLIDE-->
<div class="a" style="left:1894px;top:242px;width:24px;height:623px;background:#dadada"></div>
<div class="a" style="left:1894px;top:218px;width:25px;height:25px;background:#fff;border:1px solid #c6c6c6"></div>
<svg class="a" style="left:1894px;top:218px" width="25" height="25"><path d="M7 15H18L12.5 9.5Z" fill="#777"/></svg>
<div class="a" style="left:1894px;top:554px;width:25px;height:311px;background:#fff;border:1px solid #b9b9b9"></div>
<div class="a" style="left:1894px;top:865px;width:25px;height:25px;background:#fff;border:1px solid #c6c6c6"></div>
<svg class="a" style="left:1894px;top:865px" width="25" height="25"><path d="M7 10H18L12.5 15.5Z" fill="#777"/></svg>
<svg class="a" style="left:1894px;top:890px" width="25" height="50"><path d="M6.5 12.6H18.5L12.5 7ZM6.5 18.4H18.5L12.5 12.8Z" fill="#777"/><path d="M6.5 34H18.5L12.5 39.6ZM6.5 39.5H18.5L12.5 45.1Z" fill="#777"/></svg>
<div class="a" style="left:293px;top:972px;width:1627px;height:1px;background:#c6c6c6"></div>
<div id="status" class="a">
  <div class="st" style="left:8px;top:8px">Slide 2 of 2</div>
  <svg class="a" style="left:104px;top:4px" width="26" height="24"><path d="M2.5 3.5H7.5Q11 3.5 11.5 6V21L10 20H2.5ZM11.5 6Q12 3.5 15 3.5H20.5V11M11.5 21L13 20H15" fill="none" stroke="#666" stroke-width="1"/><path d="M15 15L18 18L23 11" fill="none" stroke="#666" stroke-width="1.6"/></svg>
  <div class="st" style="left:146px;top:8px">English (India)</div>
  <svg class="a" style="left:1250px;top:4px" width="20" height="26"><path d="M5 5.5H13L9 2Z" fill="#777"/><path d="M1 10.5H18M1 14.5H18M1 18.5H10" stroke="#777" stroke-width="1.1"/></svg>
  <div class="st" style="left:1274px;top:8px">Notes</div>
  <svg class="a" style="left:1336px;top:4px" width="22" height="24"><path d="M1.5 1.5H20V15.5H13L10.5 19.5V15.5H1.5Z" fill="#777" stroke="#777" stroke-width="1" stroke-linejoin="round"/></svg>
  <div class="st" style="left:1361px;top:8px;letter-spacing:0.55px">Comments</div>
  <div class="a" style="left:1459px;top:0;width:45px;height:32px;background:#c6c6c6"></div>
  <svg class="a" style="left:0;top:-976px" width="1920" height="1007">
   <g fill="none" stroke="#707070" stroke-width="1.1">
    <rect x="1472.5" y="982.5" width="18" height="17"/><path d="M1476.5 982.5V999.5M1476.5 993.5H1490.5"/><rect x="1480.5" y="985.5" width="6" height="4.5"/>
    <rect x="1517.5" y="982.5" width="8" height="7"/><rect x="1528.5" y="982.5" width="8" height="7"/><rect x="1517.5" y="992.5" width="8" height="7"/><rect x="1528.5" y="992.5" width="8" height="7"/>
    <path d="M1562.5 982.5H1571.5V999.5H1562.5ZM1571.5 982.5H1580.5V999.5H1571.5ZM1564.5 986h5M1564.5 989h5M1564.5 992h5M1564.5 995h5M1573.5 986h5M1573.5 989h5M1573.5 992h5M1573.5 995h5"/>
    <path d="M1607 982.5H1626M1609.5 982.5V992.5H1623.5V982.5M1616.5 992.5V999.5M1612.5 999.5H1620.5M1612 987H1621"/>
    <path d="M1661.5 991.5H1810.5M1736.5 987V996" stroke="#9a9a9a" stroke-width="1"/>
    <rect x="1894.5" y="984.5" width="16" height="16"/>
    <path d="M1902.5 986.5V990.5M1902.5 994.5V998.5M1896.5 992.5H1900.5M1904.5 992.5H1908.5" stroke-width="0.9"/>
   </g>
   <path d="M1644.4 991.5H1656.4M1816 991.3H1829.7M1822.8 984.5V998" stroke="#6a6a6a" stroke-width="2.6"/>
   <rect x="1708" y="983.5" width="6" height="16" fill="#6a6a6a"/>
  </svg>
  <div class="st" style="left:1846px;top:8px">68%</div>
</div>
</body></html>
